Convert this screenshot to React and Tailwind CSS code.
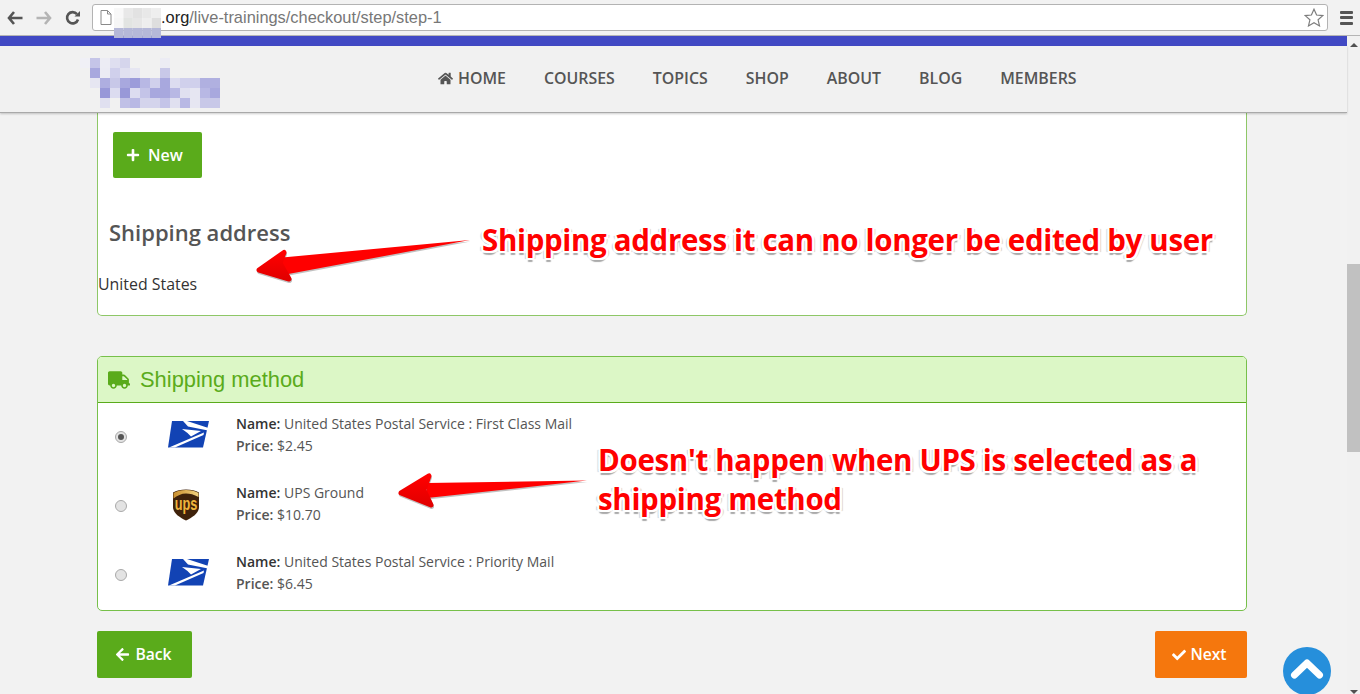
import { FaHome, FaPlus, FaTruck, FaArrowLeft, FaCheck } from "react-icons/fa";

const navItems = ["COURSES", "TOPICS", "SHOP", "ABOUT", "BLOG", "MEMBERS"];

const methods = [
    { name: "United States Postal Service : First Class Mail", price: "$2.45", logo: "usps", checked: true },
    { name: "UPS Ground", price: "$10.70", logo: "ups" },
    { name: "United States Postal Service : Priority Mail", price: "$6.45", logo: "usps" },
];

// pixelated logo, 10px blocks: [column, row, colour]
const logoBlocks = [
    [0, 0, "#f0f0f6"], [1, 0, "#c5c5e8"], [2, 0, "#ececf4"], [3, 0, "#dfdff0"], [4, 0, "#d5d5ec"], [8, 0, "#ececf4"],
    [1, 1, "#a8a8de"], [2, 1, "#ebebf4"], [3, 1, "#d0d0ec"], [4, 1, "#e0e0f0"], [5, 1, "#e6e6f2"], [8, 1, "#c8c8e8"],
    [1, 2, "#e6e6f2"], [2, 2, "#aeaee0"], [3, 2, "#c8c8e8"], [4, 2, "#a8a8de"], [5, 2, "#9c9cda"], [6, 2, "#b8b8e4"], [7, 2, "#d0d0ec"], [8, 2, "#a8a8de"], [9, 2, "#dcdcf0"], [10, 2, "#d0d0ec"], [11, 2, "#d0d0ec"], [12, 2, "#b0b0e0"], [13, 2, "#b0b0e0"],
    [2, 3, "#9898d8"], [3, 3, "#dcdcf0"], [4, 3, "#9898d8"], [5, 3, "#dcdcf0"], [6, 3, "#c4c4e8"], [7, 3, "#a8a8de"], [8, 3, "#a8a8de"], [9, 3, "#b8b8e4"], [10, 3, "#e0e0f0"], [11, 3, "#e6e6f2"], [12, 3, "#b8b8e4"], [13, 3, "#a8a8de"],
    [2, 4, "#e0e0f0"], [4, 4, "#c0c0e6"], [5, 4, "#b8b8e4"], [6, 4, "#d4d4ec"], [7, 4, "#d4d4ec"], [8, 4, "#c4c4e8"], [9, 4, "#e0e0f0"], [10, 4, "#b8b8e4"], [11, 4, "#e6e6f2"], [12, 4, "#c8c8e8"], [13, 4, "#c8c8e8"],
];

const urlBlocks = [
    [0, 0, "#f8f8f8"], [1, 0, "#e8e8e8"], [2, 0, "#e2e2e2"], [3, 0, "#e8e8e8"], [4, 0, "#eeeeee"],
    [0, 1, "#f6f6f6"], [1, 1, "#e2e4e2"], [2, 1, "#e6e6e6"], [3, 1, "#eeeeee"], [4, 1, "#dedede"],
    [0, 2, "#b5b8d8"], [1, 2, "#b5b8d8"], [2, 2, "#b5b8d8"], [3, 2, "#b5b8d8"], [4, 2, "#b5b8d8"],
];

function PixelLogo() {
    return (
        <svg width="140" height="50" className="absolute left-[80px] top-[12px]">
            {logoBlocks.map(([c, r, fill]) => (
                <rect key={`${c}-${r}`} x={c * 10} y={r * 10} width="10" height="10" fill={fill} />
            ))}
        </svg>
    );
}

function UspsLogo() {
    return (
        <svg width="42" height="27" viewBox="0 0 42 27">
            <polygon points="4,0 41,0 35,26.5 0,26.5" fill="#1243b4" />
            <path d="M15 0 L19 0 L40.5 7 L40 9.5 L20 5.5 Z" fill="#ffffff" />
            <path d="M14 8 L33 10 L23 15.5 L19.5 12 Z" fill="#ffffff" />
            <path d="M36 11.5 L35.5 14 L7 26.5 L1 26.5 Z" fill="#ffffff" />
        </svg>
    );
}

function UpsLogo() {
    return (
        <svg width="28" height="32" viewBox="0 0 28 32">
            <defs>
                <linearGradient id="shieldGold" x1="0" y1="0" x2="1" y2="0">
                    <stop offset="0" stopColor="#c98f2e" />
                    <stop offset="1" stopColor="#f3d27f" />
                </linearGradient>
            </defs>
            <path d="M14 0.5 C19 0.5 24 1.5 27 3.5 L27 18 C27 24.5 20 28.5 14 31.5 C8 28.5 1 24.5 1 18 L1 3.5 C4 1.5 9 0.5 14 0.5 Z" fill="#3f220b" />
            <path d="M14 1 C19 1 23.5 2 26.5 4 L26.5 8 C22 5.5 18 4.5 14 4.5 C9.5 4.5 5 6.5 1.5 9.5 L1.5 4 C4.5 2 9 1 14 1 Z" fill="url(#shieldGold)" />
            <text transform="translate(14 20.5) scale(0.85 1.25)" textAnchor="middle" fontFamily="'Liberation Sans', sans-serif" fontWeight="700" fontSize="15" fill="#f0b43c">ups</text>
        </svg>
    );
}

function Radio({ checked }) {
    return (
        <div className="w-[12px] h-[12px] rounded-full border border-[#a9a9a9] bg-[#e3e3e3] flex items-center justify-center">
            {checked && <div className="w-[6px] h-[6px] rounded-full bg-[#555555]"></div>}
        </div>
    );
}

function RedArrow({ className, width, height, shaft, head, id }) {
    return (
        <svg width={width} height={height} className={`absolute ${className}`}>
            <defs>
                <linearGradient id={id} x1="0" y1="0" x2="0" y2="1">
                    <stop offset="0" stopColor="#ff0000" />
                    <stop offset="1" stopColor="#e20000" />
                </linearGradient>
            </defs>
            <g opacity="0.4" transform="translate(0.5 1.5)">
                <polygon points={shaft} fill="#666666" />
                <polygon points={head} fill="#666666" stroke="#666666" strokeWidth="5" strokeLinejoin="round" />
            </g>
            <polygon points={shaft} fill="#ff0000" />
            <polygon points={head} fill={`url(#${id})`} stroke={`url(#${id})`} strokeWidth="5" strokeLinejoin="round" />
        </svg>
    );
}

export default function App() {
    return (
        <div className="relative w-[1360px] h-[694px] overflow-hidden flex flex-col bg-[#f2f2f2] font-['Open_Sans',sans-serif]">
            {/* Browser bar */}
            <div className="h-[36px] shrink-0 flex items-center bg-[#f2f2f2] border-b border-[#b5b5b5]">
                <svg width="16" height="14" viewBox="0 0 16 14" className="ml-[7px]">
                    <path d="M7 1 L2 7 L7 13 M2.5 7 L15.5 7" fill="none" stroke="#555555" strokeWidth="2.6" />
                </svg>
                <svg width="16" height="14" viewBox="0 0 16 14" className="ml-[13px]">
                    <path d="M9 1 L14 7 L9 13 M13.5 7 L0.5 7" fill="none" stroke="#b4b4b4" strokeWidth="2.6" />
                </svg>
                <svg width="16" height="16" viewBox="0 0 16 16" className="ml-[13px]">
                    <path d="M13 9.5 A5.6 5.6 0 1 1 12 4.2" fill="none" stroke="#555555" strokeWidth="2.6" />
                    <path d="M9.5 6.5 L15 6.5 L15 1 Z" fill="#555555" />
                </svg>
                <div className="ml-[11px] w-[1236px] h-[27px] flex items-center bg-white border border-[#b3b3b3] rounded-[3px]">
                    <svg width="12" height="15" viewBox="0 0 12 15" className="ml-[7px]">
                        <path d="M1 .5 H7.5 L11 4 V14.5 H1 Z M7.5 .5 V4 H11" fill="#ffffff" stroke="#8a8a8a" />
                    </svg>
                    <span className="ml-[49px] text-[16.4px] text-[#777777] font-['Liberation_Sans',sans-serif] whitespace-nowrap">
                        <span className="text-[#222222]">.org</span>/live-trainings/checkout/step/step-1
                    </span>
                    <svg width="20" height="19" viewBox="0 0 20 19" className="ml-auto mr-[3px]">
                        <path d="M10 1.2 L12.6 7 L18.8 7.6 L14.1 11.8 L15.5 17.9 L10 14.7 L4.5 17.9 L5.9 11.8 L1.2 7.6 L7.4 7 Z" fill="#ffffff" stroke="#7d7d7d" strokeWidth="1.2" />
                    </svg>
                </div>
                <div className="ml-[12px] flex flex-col gap-[2.5px]">
                    <div className="w-[13px] h-[3px] rounded-[1px] bg-[#555555]"></div>
                    <div className="w-[13px] h-[3px] rounded-[1px] bg-[#555555]"></div>
                    <div className="w-[13px] h-[3px] rounded-[1px] bg-[#555555]"></div>
                </div>
            </div>

            <div className="flex-1 flex min-h-0">
                {/* Page */}
                <div className="relative w-[1347px] flex flex-col">
                    <div className="h-[10px] shrink-0 bg-[#4149c4]"></div>
                    <div className="relative z-10 h-[67px] shrink-0 bg-[#f1f1f1] border-b border-[#a9a9a9] shadow-[0_1px_2px_rgba(0,0,0,0.2)] flex items-center pb-[1px] pl-[438px] text-[15.9px] font-semibold text-[#555555]">
                        <PixelLogo />
                        <div className="flex items-center gap-[38px]">
                            <span className="flex items-center gap-[5px]">
                                <FaHome size={15} />
                                HOME
                            </span>
                            {navItems.map((item) => (
                                <span key={item}>{item}</span>
                            ))}
                        </div>
                    </div>

                    <div className="pl-[97px] pr-[100px]">
                        {/* Address card */}
                        <div className="h-[203px] bg-white border border-t-0 border-[#8ec767] rounded-b-[5px]">
                            <div className="pl-[15px] pt-[19px]">
                                <button className="w-[89px] h-[46px] flex items-center gap-[8px] pl-[13px] rounded-[2px] bg-[#5aab1b] text-white text-[16px] font-semibold">
                                    <FaPlus size={14} />
                                    New
                                </button>
                            </div>
                            <h3 className="mt-[39px] ml-[11px] text-[22px] leading-[30px] font-semibold text-[#555555]">Shipping address</h3>
                            <p className="mt-[26px] text-[15.9px] leading-[22px] text-[#333333]">United States</p>
                        </div>

                        {/* Shipping method card */}
                        <div className="mt-[40px] h-[255px] bg-white border border-[#77c04a] rounded-[5px] overflow-hidden">
                            <div className="h-[46px] flex items-center gap-[10px] pl-[10px] pt-[1px] bg-[#dcf7c6] border-b border-[#5aab1b] text-[#5aab1b]">
                                <FaTruck size={22} />
                                <span className="text-[21.9px] font-['Liberation_Sans',sans-serif]">Shipping method</span>
                            </div>
                            <div className="pt-[10px]">
                                {methods.map((m) => (
                                    <div key={m.name} className="h-[69px] flex text-[14px] leading-[22px] text-[#555555]">
                                        <div className="w-[138px] flex items-start">
                                            <div className="ml-[17px] mt-[18px]">
                                                <Radio checked={m.checked} />
                                            </div>
                                            <div className={`ml-[41px] w-[42px] shrink-0 h-[36px] flex items-center ${m.logo === "usps" ? "mt-[3px]" : "mt-[5px] justify-center pr-[7px]"}`}>
                                                {m.logo === "usps" ? <UspsLogo /> : <UpsLogo />}
                                            </div>
                                        </div>
                                        <div>
                                            <div>
                                                <span className="font-semibold text-[#333333]">Name:</span> {m.name}
                                            </div>
                                            <div>
                                                <span className="font-semibold">Price:</span> {m.price}
                                            </div>
                                        </div>
                                    </div>
                                ))}
                            </div>
                        </div>

                        {/* Footer buttons */}
                        <div className="mt-[20px] flex justify-between">
                            <button className="w-[95px] h-[47px] flex items-center justify-center gap-[5px] pr-[2px] rounded-[2px] bg-[#5aab1b] text-white text-[15.7px] font-semibold">
                                <FaArrowLeft size={15} />
                                Back
                            </button>
                            <button className="w-[92px] h-[47px] flex items-center justify-center gap-[4px] pr-[3px] rounded-[2px] bg-[#f5770d] text-white text-[15.7px] font-semibold">
                                <FaCheck size={14} />
                                Next
                            </button>
                        </div>
                    </div>
                </div>

                {/* Scrollbar */}
                <div className="w-[13px] flex flex-col items-center bg-[#f1f1f1]">
                    <div className="mt-[7px] w-0 h-0 border-x-[4px] border-x-transparent border-b-[4px] border-b-[#505050]"></div>
                    <div className="mt-[217px] w-full h-[188px] bg-[#c1c1c1]"></div>
                    <div className="mt-[238px] w-0 h-0 border-x-[4px] border-x-transparent border-t-[4px] border-t-[#505050]"></div>
                </div>
            </div>

            {/* Pixelated domain in the address bar */}
            <svg width="47" height="30" className="absolute left-[114px] top-[8px]">
                {urlBlocks.map(([c, r, fill]) => (
                    <rect key={`${c}-${r}`} x={c * 9.4} y={r * 10} width="9.4" height="10" fill={fill} />
                ))}
            </svg>

            {/* Scroll to top */}
            <div className="absolute left-[1283px] top-[647px] w-[48px] h-[48px] rounded-full bg-[#268fdb]">
                <svg width="48" height="48" viewBox="0 0 48 48">
                    <path d="M11.5 28 L24 16 L36.5 28" fill="none" stroke="#ffffff" strokeWidth="7" strokeLinecap="round" strokeLinejoin="round" />
                </svg>
            </div>

            {/* Annotations */}
            <RedArrow
                id="arrowOne"
                className="left-[250px] top-[235px]"
                width="225"
                height="55"
                shaft="220,5 27,23 33,40"
                head="9,35 34,17.5 30,28 39,44"
            />
            <RedArrow
                id="arrowTwo"
                className="left-[393px] top-[468px]"
                width="200"
                height="45"
                shaft="194,12.5 34,15 34,30"
                head="8,25 36,8 31,22 38,37"
            />
            <div className="absolute left-[482px] top-[220px] text-[29.5px] leading-[40px] font-bold tracking-[-0.33px] text-[#ff0000] whitespace-nowrap [text-shadow:-2px_0_0_#fff,2px_0_0_#fff,0_-2px_0_#fff,0_2px_0_#fff,-2px_-2px_0_#fff,2px_-2px_0_#fff,-2px_2px_0_#fff,2px_2px_0_#fff,-3px_1px_1px_#ccc,3px_1px_1px_#ccc,0_4px_1px_#aaa]">
                Shipping address it can no longer be edited by user
            </div>
            <div className="absolute left-[598px] top-[440px] text-[29.5px] leading-[39px] font-bold tracking-[-0.33px] text-[#ff0000] whitespace-nowrap [text-shadow:-2px_0_0_#fff,2px_0_0_#fff,0_-2px_0_#fff,0_2px_0_#fff,-2px_-2px_0_#fff,2px_-2px_0_#fff,-2px_2px_0_#fff,2px_2px_0_#fff,-3px_1px_1px_#ccc,3px_1px_1px_#ccc,0_4px_1px_#aaa]">
                Doesn't happen when UPS is selected as a
                <br />
                shipping method
            </div>
        </div>
    );
}
